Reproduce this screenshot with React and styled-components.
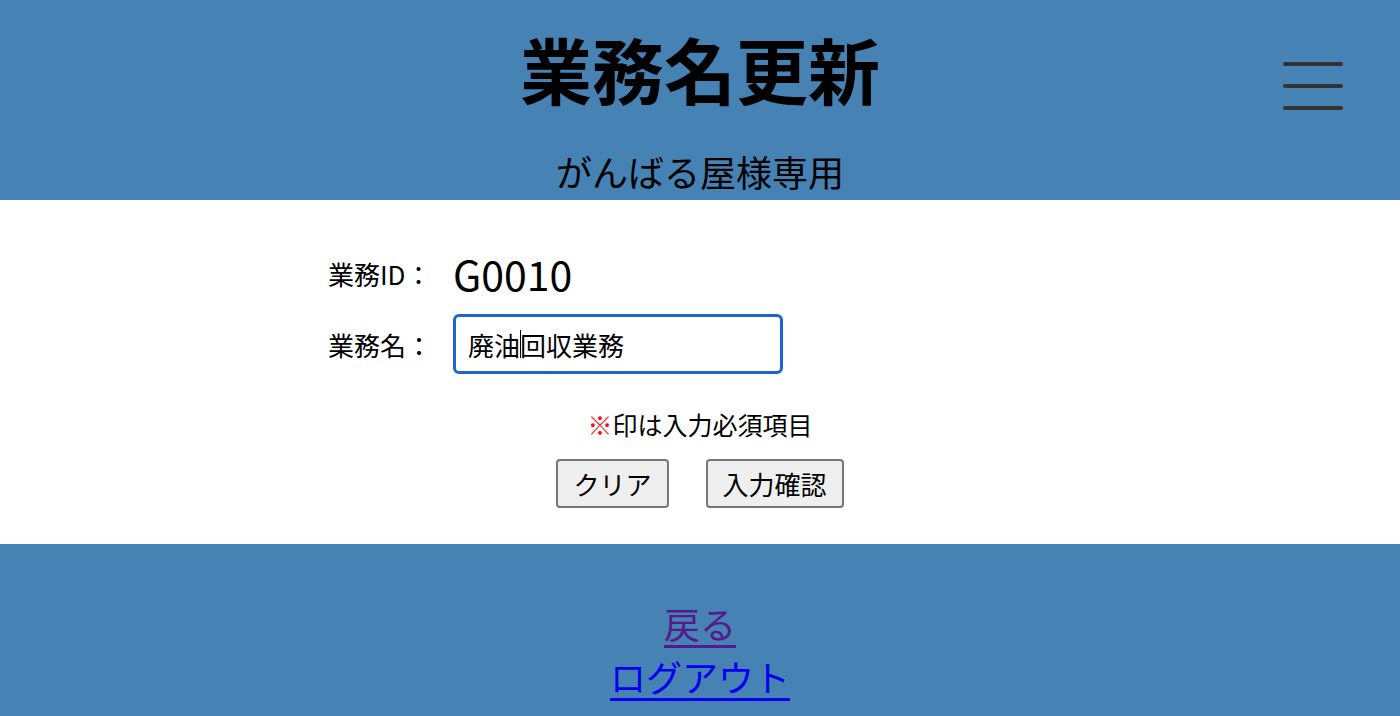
import styled, { createGlobalStyle } from "styled-components";

const GlobalStyle = createGlobalStyle`
  html, body {
    margin: 0;
    padding: 0;
    background: #fff;
    font-family: "Noto Sans CJK JP", "Noto Sans", sans-serif;
  }
`;

const Header = styled.header`
  position: relative;
  background: steelblue;
  height: 200px;
  padding-top: 32px;
  box-sizing: border-box;
  text-align: center;
  color: #000;
`;

const Title = styled.h1`
  margin: 0;
  font-size: 72px;
  line-height: 72px;
  font-weight: 700;
`;

const Subtitle = styled.p`
  margin: 47px 0 0;
  font-size: 36px;
  line-height: 40px;
`;

const MenuButton = styled.button`
  position: absolute;
  top: 62px;
  right: 56px;
  width: 62px;
  height: 48px;
  padding: 0;
  border: none;
  background: transparent;
  display: flex;
  flex-direction: column;
  justify-content: space-between;
  align-items: center;
  span {
    display: block;
    width: 60px;
    height: 4px;
    border-radius: 2px;
    background: #333;
  }
`;

const Main = styled.main`
  padding: 48px 0 36px;
`;

const Form = styled.div`
  display: grid;
  grid-template-columns: 125px 330px;
  grid-template-rows: 50px 60px;
  row-gap: 16px;
  align-items: center;
  padding-left: 328px;
`;

const Label = styled.label`
  font-size: 26px;
  color: #000;
`;

const Value = styled.span`
  font-size: 41px;
  color: #000;
`;

const InputWrap = styled.div`
  position: relative;
  width: 330px;
  height: 60px;
`;

const TextInput = styled.input`
  box-sizing: border-box;
  width: 100%;
  height: 100%;
  padding: 0 12px;
  font-family: inherit;
  font-size: 26px;
  color: #000;
  border: 3px solid #1a66cc;
  border-radius: 6px;
  outline: none;
  caret-color: transparent;
`;

const Caret = styled.span`
  position: absolute;
  left: ${(p) => p.$left}px;
  top: 16px;
  width: 1px;
  height: 28px;
  background: #000;
  pointer-events: none;
`;

const Note = styled.p`
  margin: 35px 0 0;
  text-align: center;
  font-size: 25px;
  line-height: 30px;
  span {
    color: #e8141c;
  }
`;

const Buttons = styled.div`
  margin-top: 20px;
  display: flex;
  justify-content: center;
  gap: 37px;
`;

const Button = styled.button`
  height: 49px;
  padding: 0 15px;
  font-family: inherit;
  font-size: 26px;
  color: #000;
  background: #efefef;
  border: 2px solid #767676;
  border-radius: 4px;
`;

const Footer = styled.footer`
  background: steelblue;
  padding-top: 53px;
  min-height: 172px;
  box-sizing: border-box;
  display: flex;
  flex-direction: column;
  align-items: center;
`;

const FooterLink = styled.a`
  font-size: 36px;
  line-height: 53px;
  color: ${(p) => (p.$visited ? "#551a8b" : "#0000ee")};
  text-decoration: underline;
  text-underline-offset: 6px;
`;

export default function App() {
  return (
    <>
      <GlobalStyle />
      <Header>
        <Title>業務名更新</Title>
        <Subtitle>がんばる屋様専用</Subtitle>
        <MenuButton aria-label="menu">
          <span />
          <span />
          <span />
        </MenuButton>
      </Header>
      <Main>
        <Form>
          <Label>業務ID：</Label>
          <Value>G0010</Value>
          <Label htmlFor="gyomu-name">業務名：</Label>
          <InputWrap>
            <TextInput id="gyomu-name" defaultValue="廃油回収業務" />
            <Caret $left={67} />
          </InputWrap>
        </Form>
        <Note>
          <span>※</span>印は入力必須項目
        </Note>
        <Buttons>
          <Button>クリア</Button>
          <Button>入力確認</Button>
        </Buttons>
      </Main>
      <Footer>
        <FooterLink href="#" $visited>
          戻る
        </FooterLink>
        <FooterLink href="#">ログアウト</FooterLink>
      </Footer>
    </>
  );
}
